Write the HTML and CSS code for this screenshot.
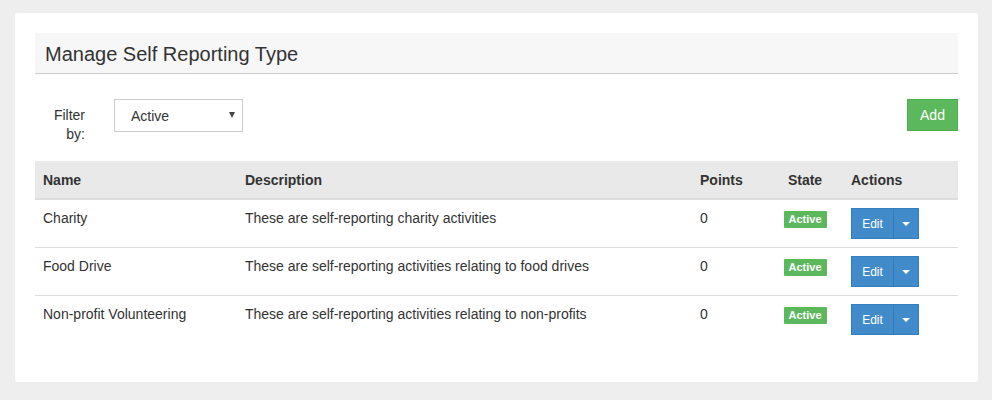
FILE: index.html
```html
<!DOCTYPE html>
<html>
<head>
<meta charset="utf-8">
<link rel="stylesheet" href="styles.css">
</head>
<body>
<div class="card">
  <div class="card-header"><h1 class="title">Manage Self Reporting Type</h1></div>
  <div class="filter-row">
    <label class="filter-label">Filter by:</label>
    <div class="select"><span class="select-text">Active</span><span class="select-arrow"></span></div>
    <div class="spacer"></div>
    <button class="btn btn-success">Add</button>
  </div>
  <table class="grid">
    <colgroup>
      <col class="c-name"><col class="c-desc"><col class="c-points"><col class="c-state"><col class="c-actions">
    </colgroup>
    <thead>
      <tr><th>Name</th><th>Description</th><th>Points</th><th class="center">State</th><th>Actions</th></tr>
    </thead>
    <tbody>
      <tr>
        <td>Charity</td>
        <td>These are self-reporting charity activities</td>
        <td>0</td>
        <td class="center"><span class="badge">Active</span></td>
        <td><div class="split"><button class="btn-primary btn-edit">Edit</button><button class="btn-primary btn-caret"><span class="caret"></span></button></div></td>
      </tr>
      <tr>
        <td>Food Drive</td>
        <td>These are self-reporting activities relating to food drives</td>
        <td>0</td>
        <td class="center"><span class="badge">Active</span></td>
        <td><div class="split"><button class="btn-primary btn-edit">Edit</button><button class="btn-primary btn-caret"><span class="caret"></span></button></div></td>
      </tr>
      <tr>
        <td>Non-profit Volunteering</td>
        <td>These are self-reporting activities relating to non-profits</td>
        <td>0</td>
        <td class="center"><span class="badge">Active</span></td>
        <td><div class="split"><button class="btn-primary btn-edit">Edit</button><button class="btn-primary btn-caret"><span class="caret"></span></button></div></td>
      </tr>
    </tbody>
  </table>
</div>
</body>
</html>
```

FILE: styles.css
```css
* { box-sizing: border-box; }
html, body { margin: 0; padding: 0; }
body {
  background: #eeeeee;
  font-family: "Liberation Sans", Arial, sans-serif;
  font-size: 14px;
  line-height: 20px;
  color: #333333;
  padding: 13px 14px 18px 15px;
}
.card {
  background: #ffffff;
  border-radius: 3px;
  padding: 20px 20px 39px 20px;
  height: 369px;
}
.card-header {
  background: #f7f7f7;
  border-bottom: 1px solid #cccccc;
  height: 41px;
  padding: 0 10px;
  display: flex;
  align-items: center;
}
.title {
  margin: 0;
  font-size: 20px;
  font-weight: normal;
  line-height: 24px;
  color: #333333;
  padding-top: 1px;
}
.filter-row {
  display: flex;
  align-items: flex-start;
  margin-top: 25px;
  height: 62px;
}
.filter-label {
  width: 50px;
  padding-top: 7px;
  text-align: right;
  line-height: 19px;
  color: #333333;
}
.select {
  margin-left: 29px;
  width: 129px;
  height: 33px;
  border: 1px solid #cccccc;
  display: flex;
  align-items: center;
  padding: 0 7px 0 16px;
}
.select-text { flex: 1; color: #333333; }
.select-arrow {
  width: 0; height: 0;
  border-left: 3.5px solid transparent;
  border-right: 3.5px solid transparent;
  border-top: 6px solid #444444;
  margin-top: -1px;
}
.spacer { flex: 1; }
.btn {
  font-family: inherit;
  font-size: 14px;
  line-height: 20px;
  border-radius: 0;
  cursor: pointer;
}
.btn-success {
  background: #5cb85c;
  border: 1px solid #4cae4c;
  color: #ffffff;
  padding: 5px 11px;
  height: 32px;
  width: 51px;
}
.grid {
  width: 100%;
  border-collapse: collapse;
  table-layout: fixed;
}
.c-name { width: 202px; }
.c-desc { width: 455px; }
.c-points { width: 83px; }
.c-state { width: 68px; }
.c-actions { width: auto; }
.grid th {
  background: #e9e9e9;
  text-align: left;
  font-weight: bold;
  padding: 8px 8px;
  height: 38px;
  border-bottom: 2px solid #dddddd;
  vertical-align: middle;
}
.grid td {
  padding: 8px 8px;
  vertical-align: top;
  border-top: 1px solid #dddddd;
  height: 48px;
}
.grid tbody tr:first-child td { border-top: 0; }
.grid .center { text-align: center; padding-left: 0; padding-right: 8px; }
.badge {
  display: inline-block;
  background: #5cb85c;
  color: #ffffff;
  font-weight: bold;
  font-size: 11px;
  line-height: 13px;
  padding: 2px 4px 2px 4px;
  width: 43px;
  text-align: center;
  margin-top: 3px;
  border-radius: 1px;
}
.split { display: flex; }
.btn-primary {
  background: #428bca;
  border: 1px solid #357ebd;
  color: #ffffff;
  font-family: inherit;
  font-size: 12px;
  line-height: 18px;
  height: 31px;
  margin: 0;
  border-radius: 0;
}
.btn-edit { width: 43px; padding: 0; }
.btn-caret {
  width: 26px;
  padding: 0;
  border-left: 1px solid #357ebd;
  margin-left: -1px;
  display: flex;
  align-items: center;
  justify-content: center;
}
.caret {
  width: 0; height: 0;
  border-left: 4px solid transparent;
  border-right: 4px solid transparent;
  border-top: 4px solid #ffffff;
}
```
